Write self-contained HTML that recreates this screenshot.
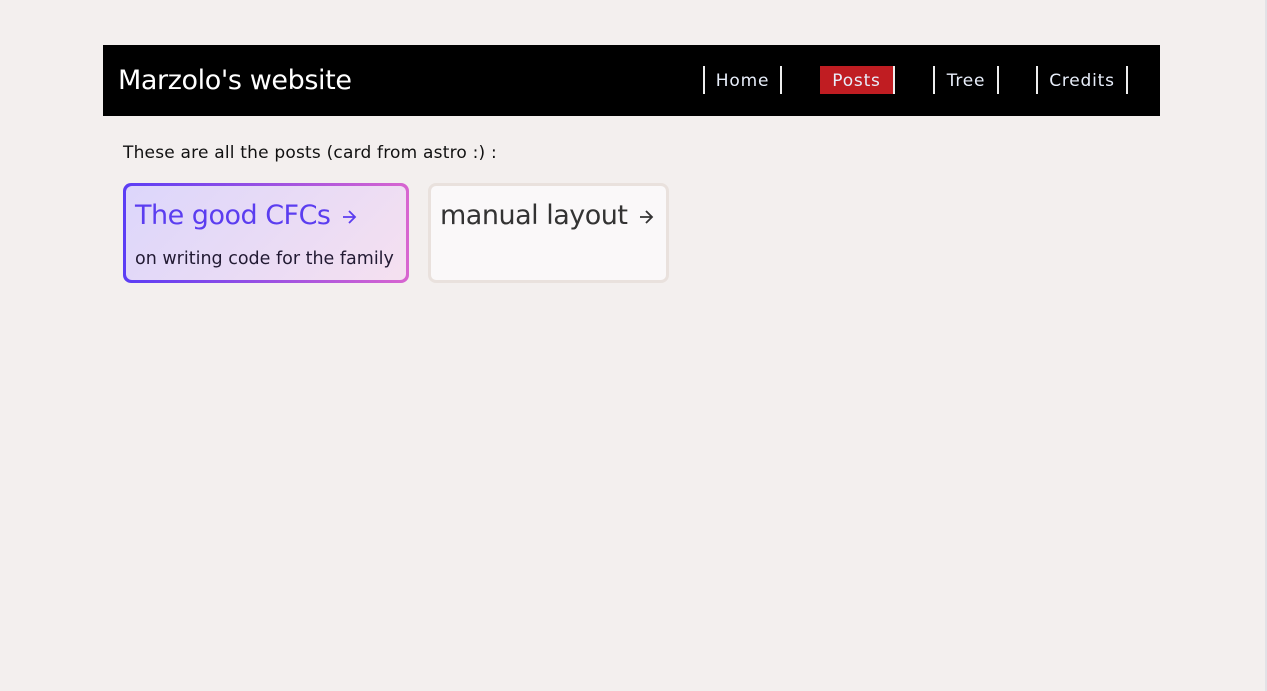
<!DOCTYPE html>
<html><head><style>
body{margin:0;background:#f3efee;font-family:"DejaVu Sans","Liberation Sans",sans-serif;width:1267px;height:691px;overflow:hidden;position:relative}
.hdr{position:absolute;left:103px;top:45px;width:1057px;height:71px;background:#000}
.title{position:absolute;left:15px;top:20px;color:#fff;font-size:27px;letter-spacing:-0.4px}
.nav a{position:absolute;top:21px;height:28px;line-height:31px;color:#e8eefa;font-size:17px;letter-spacing:0.8px;border-left:2px solid #eee;border-right:2px solid #eee;text-align:center;box-sizing:border-box;text-decoration:none}
p.intro{position:absolute;left:123px;top:143px;margin:0;font-size:17px;color:#111;letter-spacing:0.2px}
.card{position:absolute;top:183px;height:100px;border-radius:8px;box-sizing:border-box}
.c1{left:123px;width:286px;padding:3px;background:linear-gradient(90deg,#5b3df5,#d865d0)}
.c1 .in{width:100%;height:100%;border-radius:6px;background:linear-gradient(135deg,#dcd6fb,#f5e0f0)}
.c2{left:428px;width:241px;border:3px solid #e9e1dd;background:#faf8f9}
.h{position:absolute;left:12px;top:17px;font-size:27px;letter-spacing:-0.5px;white-space:nowrap}
.h svg{vertical-align:middle;margin-left:2px}
.s{position:absolute;left:12px;top:66px;font-size:17.5px;color:#221a33;letter-spacing:0;white-space:nowrap}
</style></head><body>
<div style="position:absolute;right:0;top:0;width:2px;height:691px;background:#e2e2e6"></div>
<div class="hdr">
<div class="title">Marzolo's website</div>
<div class="nav">
<a style="left:600px;width:79px">Home</a>
<a style="left:717px;width:75px;background:#c01d22;border-left:none">Posts</a>
<a style="left:830px;width:66px">Tree</a>
<a style="left:933px;width:92px">Credits</a>
</div></div>
<p class="intro">These are all the posts (card from astro :) :</p>
<div class="card c1"><div class="in"></div>
<div class="h" style="color:#5b3df0">The good CFCs <svg width="16" height="16" viewBox="0 0 16 16"><path d="M2 8H14M8 2L14 8L8 14" fill="none" stroke="#5b3df0" stroke-width="1.8"/></svg></div>
<div class="s">on writing code for the family</div></div>
<div class="card c2"><div class="h" style="left:9px;top:14px;color:#333">manual layout <svg width="16" height="16" viewBox="0 0 16 16"><path d="M2 8H14M8 2L14 8L8 14" fill="none" stroke="#333" stroke-width="1.8"/></svg></div></div>
</body></html>
